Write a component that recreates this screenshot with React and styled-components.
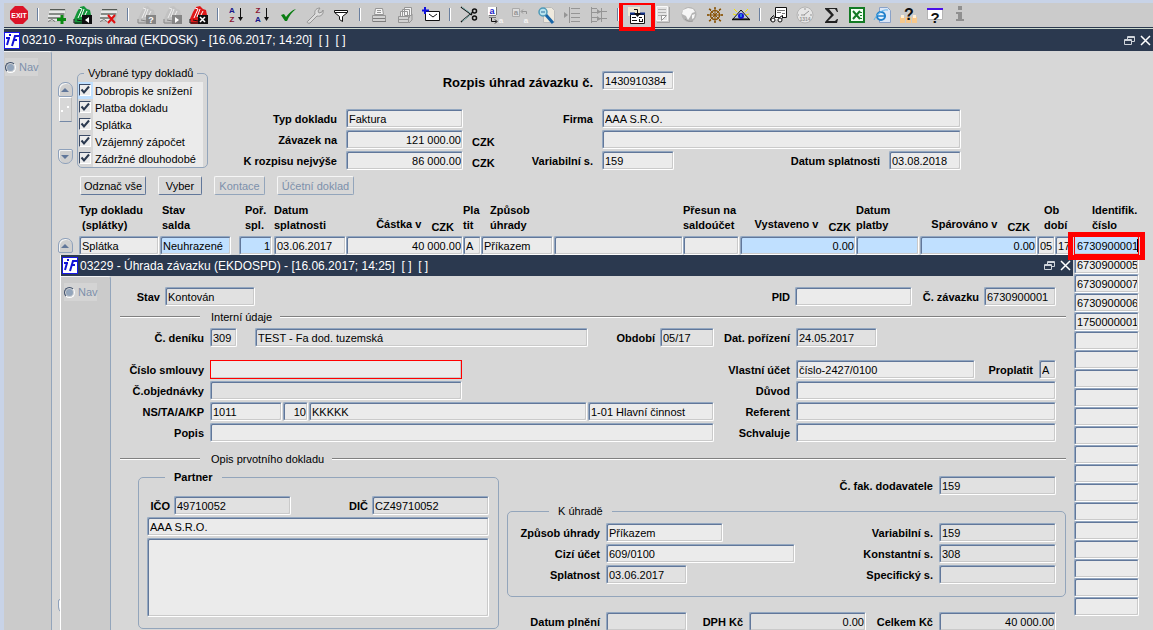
import React from 'react'
import styled, { createGlobalStyle, css } from 'styled-components'

const GlobalStyle = createGlobalStyle`
* { box-sizing: border-box; }
html, body { margin: 0; height: 100%; overflow: hidden; }
body, input, button, textarea {
  font-family: "Liberation Sans", Arial, sans-serif;
  font-size: 11px;
  color: #000;
}
`

const Desktop = styled.div`
height: 100vh;
display: flex;
flex-direction: column;
overflow: hidden;
background-color: #d7d7d7;
border-left: 4px solid #c8d3e7;
border-top: 3px solid #c8d3e7;
`
const Toolbar = styled.div`
height: 26px;
flex: none;
display: flex;
align-items: flex-start;
padding-left: 2px;
background-color: #cbcbcb;
border-bottom: 1px solid #ccd8cc;
box-shadow: inset 0 -1px #2b394f;
`
const ToolButton = styled.button`
position: relative;
flex: none;
width: 26px;
height: 24px;
padding: 0;
border: 0;
background: none;
display: flex;
align-items: center;
justify-content: center;
`
const Separator = styled.span`
flex: none;
width: 2px;
height: 13px;
margin: 5px;
background-color: #fff;
border-left: 1px solid #6a7f9f;
`
const Marker = styled.span`
position: absolute;
pointer-events: none;
z-index: 3;
border: 5px solid #ff0000;
${(props) => props.$tool
  ? css`left: -5px; top: -2px; width: 36px; height: 30px; border-width: 4px;`
  : css`left: -6px; top: -4px; right: -5px; bottom: -5px;`}
`
const TitleBar = styled.div`
height: ${(props) => (props.$child ? 21 : 22)}px;
flex: none;
display: flex;
align-items: center;
gap: 2px;
padding: 0 1px 0 ${(props) => (props.$child ? 1 : 0)}px;
background-color: #2b394f;
color: #fff;
font-size: 12px;
white-space: pre;
`
const WindowTitle = styled.span`
flex: 1;
`
const WindowButton = styled.button`
width: 14px;
height: 14px;
padding: 0;
border: 0;
background: none;
display: flex;
align-items: center;
justify-content: center;
`
const WindowBody = styled.div`
position: relative;
flex: 1;
min-height: 0;
display: flex;
`
const Sidebar = styled.div`
flex: none;
width: ${(props) => (props.$child ? 50 : 48)}px;
padding: 6px 0 0 ${(props) => (props.$child ? 3 : 1)}px;
background-color: #cbcbcb;
border-right: 1px solid #93a5bb;
border-top: 1px solid #f2f2f2;
border-top-right-radius: 3px;
`
const NavLabel = styled.label`
width: 33px;
height: 18px;
display: flex;
align-items: center;
gap: 3px;
color: #7d90ab;
background-color: #d4d4d4;
`
const NavRadio = styled.input`
appearance: none;
flex: none;
width: 11px;
height: 11px;
margin: 0;
border: 1px solid #41516b;
border-right-color: #fff;
border-bottom-color: #fff;
border-radius: 50%;
background-color: #93a5bb;
box-shadow: inset 0 0 0 1px #d4d4d4;
`
const Main = styled.div`
flex: 1;
min-width: 0;
padding: 0 13px 0 6px;
`
const Top = styled.div`
display: flex;
height: 121px;
`
const ScrollBar = styled.div`
flex: none;
width: 15px;
height: 82px;
margin: 31px 4px 0 0;
display: flex;
flex-direction: column;
`
const ScrollButton = styled.button`
width: 15px;
height: 15px;
flex: none;
padding: 0;
display: flex;
align-items: center;
justify-content: center;
background-color: #cfcfcf;
border: 1px solid #8ea1bb;
border-radius: ${(props) => (props.$down ? '2px 2px 7px 7px' : '7px 7px 2px 2px')};
box-shadow: inset 1px 1px #f4f4f4;
`
const ScrollThumb = styled.div`
height: 25px;
margin: 0 1px auto;
display: flex;
align-items: center;
justify-content: center;
border: 1px solid #fff;
border-bottom-color: #7488a6;
border-right-color: #bbb;
`
const Group = styled.fieldset`
min-width: 0;
margin: 0;
padding: 0;
border: 1px solid #93a5bb;
border-radius: 5px;
`
const Legend = styled.legend`
height: 14px;
line-height: 14px;
padding: 0 ${(props) => props.$pad || 4}px;
margin-left: ${(props) => props.$left}px;
font-weight: ${(props) => (props.$bold ? 'bold' : 'normal')};
`
const TypesGroup = styled(Group)`
flex: none;
width: 131px;
height: 102px;
margin-top: 15px;
padding-top: 2px;
`
const TypeRow = styled.label`
height: 17px;
margin-right: 4px;
display: flex;
align-items: center;
white-space: nowrap;
`
const TypeText = styled.span`
flex: 1;
height: 17px;
line-height: 18px;
padding-left: 2px;
background-color: #ebebeb;
`
const TickSlot = styled.span`
width: 15px;
height: 17px;
padding: 2px 0 0 1px;
background-color: ${(props) => (props.$active ? '#c0e0ff' : 'transparent')};
`
const Tick = styled.input`
appearance: none;
display: block;
width: 12px;
height: 12px;
margin: 0;
border: 1px solid #3c4b66;
border-right-color: #fff;
border-bottom-color: #fff;
background: #ececec url("data:image/svg+xml,%3Csvg xmlns='http://www.w3.org/2000/svg' viewBox='0 0 10 10'%3E%3Cpath d='M1.5 4.5l2.5 3 5-6' fill='none' stroke='%232b394f' stroke-width='2'/%3E%3C/svg%3E");
`
const HeadForm = styled.div`
flex: 1;
min-width: 0;
margin-top: 20px;
padding-right: 179px;
display: grid;
grid-template-columns: 129px 117px 121px minmax(0, 1fr);
grid-template-rows: 38px 21px 21px 21px;
column-gap: 9px;
`
const Caption = styled.label`
flex: none;
width: ${(props) => (props.$w ? `${props.$w}px` : 'auto')};
line-height: 20px;
height: 19px;
text-align: right;
font-weight: bold;
font-size: ${(props) => (props.$big ? 13 : 11)}px;
white-space: nowrap;
`
const HeadTitle = styled(Caption)`
grid-column: 1 / 4;
line-height: 24px;
`
const SplitCell = styled.div`
display: flex;
justify-content: space-between;
`
const Currency = styled.span`
font-weight: bold;
line-height: 24px;
height: 19px;
`
const fieldLook = css`
display: block;
min-width: 0;
padding: 1px 1px 0 2px;
border: 1px solid #93a7c0;
border-right-color: #fff;
border-bottom-color: #fff;
border-radius: 2px;
box-shadow: inset 1px 1px #61779a, inset -1px -1px #cacaca;
background-color: ${(props) => (props.$active ? '#c0e0ff' : props.$locked ? '#e1e1e1' : '#ebebeb')};
outline: 0;
`
const Field = styled.input`
${fieldLook}
height: 19px;
width: ${(props) => (props.$w ? `${props.$w}px` : '100%')};
flex: ${(props) => (props.$w ? 'none' : '1 1 0')};
text-align: ${(props) => (props.$num ? 'right' : 'left')};
${(props) => props.$alert && css`
border: 1px solid #ff0000;
border-radius: 0;
box-shadow: inset -1px -1px #cacaca;
`}
`
const NoteArea = styled.textarea`
${fieldLook}
width: 100%;
height: 79px;
resize: none;
`
const ButtonRow = styled.div`
display: flex;
gap: 12px;
margin-top: 4px;
padding-left: 22px;
`
const PushButton = styled.button`
width: ${(props) => props.$w}px;
height: 19px;
padding: 0;
white-space: nowrap;
border: 1px solid #f6f6f6;
border-right-color: #61779a;
border-bottom-color: #61779a;
border-radius: 2px;
background-color: #d7d7d7;
&:disabled {
  color: #7d90ab;
  border-right-color: #93a5bb;
  border-bottom-color: #93a5bb;
}
`
const Table = styled.table`
width: 100%;
margin-top: 8px;
table-layout: fixed;
border-collapse: collapse;
`
const Th = styled.th`
height: 33px;
padding: 0 0 0 ${(props) => props.$left || 0}px;
vertical-align: top;
text-align: left;
line-height: 15px;
font-size: 11px;
white-space: pre;
`
const MoneyHead = styled.div`
display: flex;
justify-content: flex-end;
gap: 10px;
padding: 14px ${(props) => props.$right}px 0 0;
`
const Unit = styled.span`
padding-top: 3px;
`
const Td = styled.td`
position: relative;
height: 19px;
padding: 0 ${(props) => props.$gap || 0}px 0 0;
`
const Caret = styled.span`
position: absolute;
right: 2px;
top: 3px;
width: 1px;
height: 13px;
background-color: #000;
`
const ChildWindow = styled.section`
position: absolute;
left: 56px;
right: 80px;
top: 204px;
bottom: 0;
z-index: 2;
display: flex;
flex-direction: column;
overflow: hidden;
background-color: #d7d7d7;
border-left: 1px solid #fff;
`
const ChildMain = styled.div`
flex: 1;
min-width: 0;
padding: 11px 7px 0 9px;
`
const Line = styled.div`
display: flex;
gap: ${(props) => (props.$gap === undefined ? 6 : props.$gap)}px;
margin: ${(props) => props.$top || 0}px 0 ${(props) => props.$bottom || 0}px;
padding-right: ${(props) => props.$right || 0}px;
`
const Push = styled.span`
flex: 1;
`
const Divider = styled.div`
display: flex;
align-items: center;
gap: 8px;
height: 14px;
margin-top: ${(props) => props.$top}px;
&::before, &::after {
  content: "";
  height: 1px;
  background-color: #808080;
  border-bottom: 1px solid #fff;
}
&::before { width: 80px; margin-right: 3px; }
&::after { flex: 1; }
`
const FormGrid = styled.div`
display: grid;
grid-template-columns: 84px minmax(0, 1fr) 70px 260px;
column-gap: 6px;
row-gap: 2px;
margin-top: ${(props) => props.$top}px;
padding-right: 10px;
`
const Columns = styled.div`
display: flex;
gap: 8px;
margin-top: 4px;
`
const PartnerGroup = styled(Group)`
flex: none;
width: 361px;
height: 159px;
margin-left: 18px;
padding: 12px 9px 0 8px;
`
const PayColumn = styled.div`
flex: 1;
min-width: 0;
padding-top: 6px;
`
const PayGroup = styled(Group)`
height: 93px;
padding: 5px 9px 0 0;
margin-top: 9px;
`

const ink = '#101010'
const grey = '#959595'

// a sheet of slanted lines, shared by the two record icons
const Sheet = () => (
  <>
    <path d="M3 4h16l-1 6-2 7H1l1-7z" fill="#b9bdb9" />
    <path d="M2 7h16M1 11h14M1 15h12" stroke="#f6f6f6" strokeWidth="1.500" />
    <path d="M3 4.500h15M2 9h15M1 13h13" stroke="#555a55" />
    <path d="M1 16.500l4-2 3 2" stroke="#777" fill="none" />
  </>
)

const Binder = ({ color, dark, shine = '#fff', sign }) => (
  <>
    <path d="M1 14L4 7l3-5 4-1 3 3 3 1 1 5-4 9H2z" fill={color} />
    <path d="M6 3l3 1-4 9M11 4L8 12M14 6l-3 6" stroke={shine} fill="none" />
    <path d="M1 14v4h8M4 15l5 1" stroke={dark} fill="none" />
    <path d="M9 10h10v9H9z" fill={dark} />
    {sign}
  </>
)

const Letter = ({ x, y, size, fill, children }) => (
  <text x={x} y={y} fontSize={size} fontWeight="bold" fill={fill} textAnchor="middle">{children}</text>
)

const icons = {
  Exit: (
    <>
      <path d="M6 1h8l5 5v8l-5 5H6l-5-5V6z" fill="#dc1428" />
      <Letter x={10} y={13} size={7} fill="#fff">EXIT</Letter>
    </>
  ),
  'Nový záznam': <><Sheet /><path d="M15 10v9M10 14.500h9" stroke="#0b8a12" strokeWidth="3" /></>,
  'Předchozí': <Binder color="#15963a" dark={ink} sign={<path d="M16 12v6l-4-3z" fill="#fff" />} />,
  'Smazat záznam': <><Sheet /><path d="M9 10l7 8M16 10l-7 8" stroke="#e01010" strokeWidth="2" /></>,
  Dotaz: <Binder color="#c2c2c2" dark="#858585" shine="#eee" sign={<Letter x={14} y={18} size={9} fill="#fff">?</Letter>} />,
  'Proveď dotaz': <Binder color="#c2c2c2" dark="#858585" shine="#eee" sign={<path d="M12 12v6l4-3z" fill="#fff" />} />,
  'Zruš dotaz': <Binder color="#e01818" dark={ink} sign={<path d="M11 12l5 5M16 12l-5 5" stroke="#fff" strokeWidth="1.500" />} />,
  'Třídit vzestupně': (
    <>
      <Letter x={5} y={8} size={8} fill="#16168a">A</Letter>
      <Letter x={5} y={17} size={8} fill="#8a1632">Z</Letter>
      <path d="M13.500 3v12" stroke={ink} />
      <path d="M11 12h5l-2.500 4z" fill={ink} />
    </>
  ),
  'Třídit sestupně': (
    <>
      <Letter x={5} y={8} size={8} fill="#8a1632">Z</Letter>
      <Letter x={5} y={17} size={8} fill="#16168a">A</Letter>
      <path d="M13.500 3v12" stroke={ink} />
      <path d="M11 12h5l-2.500 4z" fill={ink} />
    </>
  ),
  Potvrdit: <path d="M2 10l3-1 2 3c3-4 6-7 10-8-4 3-7 7-9 12H6z" fill="#0a7d12" />,
  Nastavení: (
    <path d="M3 16l7-7c-1-4 2-6 5-6l-2 3 1 2 3-1 1-2c1 4-2 7-6 6l-7 7c-2 1-4-1-2-2z" stroke={grey} fill="#ddd" />
  ),
  Filtr: <path d="M3.500 5.500h13v2l-5 4v5l-3-2v-3l-5-4zM4 7.500h12" stroke={ink} fill="#fff" />,
  Tisk: (
    <>
      <path d="M6.500 3.500h7l1 6h-9z" fill="#f5f5f5" stroke={grey} />
      <path d="M8 5.500h4M8 7.500h4" stroke={grey} />
      <path d="M3.500 10.500h13v6h-13z" fill="#d2d2d2" stroke={grey} />
      <path d="M4 13.500h12M4 16.500h13" stroke="#7c7c7c" />
    </>
  ),
  'Tisk sestav': (
    <>
      <path d="M9.500 2.500h7v8h-7zM7.500 4.500h7v8h-7zM5.500 6.500h7v6h-7z" fill="#f5f5f5" stroke={grey} />
      <path d="M3.500 11.500h10v6h-10z" fill="#d2d2d2" stroke={grey} />
      <path d="M14 12l3-3v6l-3 3M4 14.500h9" stroke={grey} fill="none" />
    </>
  ),
  Pošta: (
    <>
      <path d="M4.500 6.500h14v9h-14z" fill="#fff" stroke={ink} />
      <path d="M8 9l4 3 4-3" stroke={ink} fill="none" />
      <path d="M4 2v7M1 5.500h7" stroke="#1010e0" strokeWidth="2" />
    </>
  ),
  Vyjmout: (
    <>
      <path d="M2 2l11 8M2 17L14 7" stroke={ink} strokeWidth="1.500" />
      <path d="M3 2l9 6.500M3 16.500l8-6.500" stroke="#8fc0c0" />
      <circle cx="15.500" cy="6" r="2" fill="none" stroke={ink} strokeWidth="1.500" />
      <circle cx="15.500" cy="13" r="2" fill="none" stroke={ink} strokeWidth="1.500" />
    </>
  ),
  Kopírovat: (
    <>
      <path d="M3 2h8v8H3z" fill="#fff" />
      <path d="M4 10.500h7M4 12.500h7M11.500 2v8" stroke="#777" />
      <Letter x={7} y={9} size={9} fill="#2020c8">a</Letter>
      <path d="M6.500 13v3.500h5M10 14.500l2 2-2 2" stroke={ink} fill="none" />
      <Letter x={16} y={18} size={8} fill="#f4f4f4">a</Letter>
    </>
  ),
  Vložit: (
    <>
      <path d="M1.500 3.500h7v8h-7z" fill="#ddd" stroke="#aaa" />
      <Letter x={5} y={10} size={8} fill={grey}>a</Letter>
      <path d="M15.500 9V6.500h-5M12 4.500l-2 2 2 2" stroke={grey} fill="none" />
      <Letter x={15} y={18} size={8} fill="#f4f4f4">a</Letter>
    </>
  ),
  Lupa: (
    <>
      <path d="M6.500 2.500h8l3 3v12h-11z" fill="#eee9dd" stroke="#bbb" />
      <circle cx="6" cy="7" r="4" fill="#b8e2ee" stroke="#4f9ab8" strokeWidth="1.500" />
      <path d="M4 7h4" stroke="#2b70a0" />
      <path d="M9 10l7 8" stroke="#1764a8" strokeWidth="3" />
    </>
  ),
  'Seznam vpravo': (
    <>
      <path d="M6.500 2v16M8 3.500h9M8 8.500h9M8 12.500h9M8 16.500h9" stroke={grey} />
      <path d="M1 7l4 3-4 3z" fill={grey} />
    </>
  ),
  'Seznam vlevo': (
    <>
      <path d="M2.500 2v16M3 3.500h5M3 7.500h5M3 12.500h5M3 16.500h5M12.500 3v14M10 6.500h8M10 13.500h8" stroke={grey} />
      <path d="M8 4l4 3-4 2zM8 11l4 3-4 2z" fill={grey} />
    </>
  ),
  Detail: (
    <>
      <path d="M1 2h12v9H1z" fill="#f1ead2" />
      <path d="M3.500 9.500h14v9h-14z" fill="#fff" stroke={ink} />
      <path d="M3 8.500h5M13 8.500h5" stroke="#10308a" strokeWidth="2" />
      <path d="M5 12.500h4M5 15.500h5M12 12.500h3M12.500 14v3M12 16.500h3M15.500 14v3" stroke={ink} />
      <path d="M7 4.500h3.500V10" stroke={ink} fill="none" />
      <path d="M7 8h7l-3.500 4z" fill={ink} />
    </>
  ),
  Poznámka: (
    <>
      <path d="M3.500 1.500h11v14h-11z" fill="#e4e4e4" stroke="#f8f8f8" />
      <path d="M16.500 2v15.500H4" stroke="#a5a5a5" fill="none" />
      <path d="M5 4.500h8M5 7.500h8M5 10.500h4" stroke="#b0b0b0" />
      <path d="M8.500 15.500v-5h5z" fill="#fff" stroke={grey} />
    </>
  ),
  Svět: (
    <>
      <circle cx="10" cy="9.500" r="7.500" fill="#b4b4b4" />
      <path d="M4 5l5-2 5 1 2 3-3 1-2 4-2 3-2-4-4-2zM13 10l3-1-1 4-2 1z" fill="#f6f6f6" />
      <path d="M6 14c2 2 5 3 8 2" stroke="#999" fill="none" />
    </>
  ),
  Kormidlo: (
    <>
      <circle cx="10" cy="10" r="4.500" fill="none" stroke="#8a5508" strokeWidth="1.500" />
      <circle cx="10" cy="10" r="1.500" fill="#8a5508" />
      <path d="M10 3v14M2 10h16M5 5l10 10M15 5L5 15" stroke="#8a5508" />
      <path d="M9 3h2M9 17h2M3 9v2M17 9v2M4 4l2 1M16 4l-2 1M4 16l2-1M16 16l-2-1" stroke="#8a5508" strokeWidth="1.500" />
    </>
  ),
  Oko: (
    <>
      <path d="M3 4l3 3M17 4l-3 3M2 9l3 1M18 9l-3 1" stroke="#f2e400" />
      <path d="M10 5l8 9H2z" fill="#b9c8dc" stroke={ink} />
      <circle cx="10" cy="11" r="3" fill="#1212d8" />
      <path d="M10 9v3" stroke="#2fe0e0" />
      <path d="M1 14.500h18" stroke={ink} strokeWidth="1.500" />
    </>
  ),
  Vozík: (
    <>
      <path d="M6.500 2.500h11v10h-11z" fill="#fff" stroke={ink} />
      <path d="M8 5.500h8M8 7.500h4M13 8.500h3" stroke="#777" />
      <path d="M1.500 15.500v-2l3-3 1 2h5l3-2v3" fill="#fff" stroke={ink} />
      <circle cx="4" cy="15" r="2" fill="#fff" stroke={ink} />
      <circle cx="11" cy="15" r="2" fill="#fff" stroke={ink} />
    </>
  ),
  Hodiny: (
    <>
      <circle cx="10" cy="10" r="8" fill="#e6e6e6" stroke="#b4b4b4" />
      <path d="M9 10l5-4M10 10H6M10 3v2M3 10h1M15 10h2" stroke={grey} />
      <Letter x={10} y={16} size={5} fill={grey}>1314</Letter>
    </>
  ),
  Součet: <path d="M17 7l-1-4H4v1l6 6-6 7v1h12l1-4h-1l-2 2H7l6-6-5-6h6l2 3z" fill="#222" />,
  Excel: (
    <>
      <path d="M3 3h14v14H3z" fill="#f4fff4" stroke="#137a24" strokeWidth="2" />
      <path d="M6 6l7 8M13 6l-7 8" stroke="#137a24" strokeWidth="2" />
      <path d="M13 7.500h2M13 10.500h2M13 13.500h2" stroke="#137a24" />
    </>
  ),
  Prohlížeč: (
    <>
      <path d="M6.500 2.500h8l3 3v12h-11z" fill="#dbe6f6" stroke="#8aa2c8" />
      <circle cx="8" cy="11" r="4" fill="#e8f4ff" stroke="#2080cc" strokeWidth="2" />
      <path d="M4 11h9" stroke="#2080cc" strokeWidth="1.500" />
      <path d="M1 15c3-6 8-11 14-10" stroke="#5fb4ea" fill="none" />
    </>
  ),
  Poradce: (
    <>
      <path d="M1 12h5v6H1zM7 12h5v6H7zM13 12h5v6h-5z" fill="#f7c98c" />
      <path d="M2 10h3v3H2zM14 10h3v3h-3z" fill="#fff1d8" />
      <Letter x={10} y={15} size={16} fill={ink}>?</Letter>
    </>
  ),
  Nápověda: (
    <>
      <path d="M2.500 3.500h15v11h-15z" fill="#fff" stroke="#b5b5b5" />
      <path d="M2 4h16" stroke="#4a10e8" strokeWidth="2" />
      <Letter x={10} y={18} size={15} fill={ink}>?</Letter>
    </>
  ),
  Informace: (
    <path d="M7 1h4v4H7zM5 7h6v7h2v2H5v-2h2V9H5z" fill="#909090" />
  ),
}

const tools = [
  'Exit', '|', 'Nový záznam', 'Předchozí', 'Smazat záznam', '|', 'Dotaz', 'Proveď dotaz', 'Zruš dotaz', '|',
  'Třídit vzestupně', 'Třídit sestupně', 'Potvrdit', 'Nastavení', 'Filtr', '|', 'Tisk', 'Tisk sestav', 'Pošta', '|',
  'Vyjmout', 'Kopírovat', 'Vložit', 'Lupa', 'Seznam vpravo', 'Seznam vlevo', '|',
  'Detail', 'Poznámka', 'Svět', 'Kormidlo', 'Oko', '|',
  'Vozík', 'Hodiny', 'Součet', 'Excel', 'Prohlížeč', 'Poradce', 'Nápověda', 'Informace',
]

const documentTypes = ['Dobropis ke snížení', 'Platba dokladu', 'Splátka', 'Vzájemný zápočet', 'Zádržné dlouhodobé']

const columns = [
  { width: 21, title: '' },
  { width: 81, title: 'Typ dokladu\n (splátky)', value: 'Splátka', gap: 1 },
  { width: 79, title: 'Stav\nsalda', left: 2, value: 'Neuhrazené', active: true, gap: 8 },
  { width: 35, title: 'Poř.\nspl.', left: 6, value: '1', num: true, active: true, gap: 2 },
  { width: 72, title: 'Datum\nsplatnosti', value: '03.06.2017' },
  { width: 117, title: 'Částka v', unit: 'CZK', right: 9, value: '40 000.00', num: true },
  { width: 18, title: 'Pla\ntit', value: 'A' },
  { width: 73, title: 'Způsob\núhrady', left: 9, value: 'Příkazem', gap: 1 },
  { title: '', value: '', name: 'Poznámka ke splátce' },
  { width: 57, title: 'Přesun na\nsaldoúčet', value: '', gap: 1 },
  { width: 116, title: 'Vystaveno v', unit: 'CZK', right: 5, value: '0.00', num: true, active: true },
  { width: 64, title: 'Datum\nplatby', value: '', active: true, gap: 1 },
  { width: 117, title: 'Spárováno v', unit: 'CZK', right: 7, value: '0.00', num: true, active: true },
  { width: 18, title: 'Ob\ndobí', left: 7, value: '05' },
  { width: 19, title: '', value: '17', name: 'Rok', gap: 1 },
  { width: 66, title: 'Identifik.\nčíslo', left: 18 },
]

const identNumbers = ['6730900001', '6730900005', '6730900007', '6730900006', '1750000001']
const rows = Array.from({ length: 20 }, (_, i) => identNumbers[i] || '')

const Arrow = ({ down }) => (
  <svg width="9" height="6" viewBox="0 0 9 6">
    <path d={down ? 'M0 1h8L4 5z' : 'M0 5h8L4 1z'} fill="#61779a" />
  </svg>
)

const Logo = () => (
  <svg width="16" height="17" viewBox="0 0 16 17" aria-label="iF">
    <path d="M0 0h16v17H0z" fill="#fff" stroke="#1717e8" strokeWidth="2" />
    <path d="M5 6L3 13M2 6h4M6 2v2M8 14l3-10h4M9 8h4" stroke="#1010d8" strokeWidth="2" fill="none" />
  </svg>
)

const Window = ({ title, child, children }) => (
  <>
    <TitleBar $child={child}>
      <Logo />
      <WindowTitle>{title}</WindowTitle>
      <WindowButton aria-label="Obnovit">
        <svg width="11" height="11" viewBox="0 0 11 11">
          <path d="M3.500 4V1.500h7v5H8M.5 4.500h7v5h-7zM4 2.500h6M1 5.500h6" stroke="#cfd4da" fill="none" />
        </svg>
      </WindowButton>
      <WindowButton aria-label="Zavřít">
        <svg width="11" height="11" viewBox="0 0 11 11">
          <path d="M1 1l9 9M10 1l-9 9" stroke="#fff" strokeWidth="1.500" />
        </svg>
      </WindowButton>
    </TitleBar>
    <WindowBody>
      <Sidebar $child={child}>
        <NavLabel><NavRadio type="radio" disabled />Nav</NavLabel>
      </Sidebar>
      {children}
    </WindowBody>
  </>
)

// label and its text box side by side
const Pair = ({ id, label, w, ...field }) => (
  <>
    <Caption htmlFor={id} $w={w}>{label}</Caption>
    <Field id={id} readOnly {...field} />
  </>
)

const HeadCell = ({ col }) => (
  <Th $left={col.left}>
    {col.unit
      ? <MoneyHead $right={col.right}>{col.title}<Unit>{col.unit}</Unit></MoneyHead>
      : col.title}
  </Th>
)

const PaymentTable = () => (
  <Table>
    <colgroup>
      {columns.map((col, i) => <col key={i} width={col.width} />)}
    </colgroup>
    <thead>
      <tr>{columns.map((col, i) => <HeadCell key={i} col={col} />)}</tr>
    </thead>
    <tbody>
      {rows.map((ident, i) => (
        <tr key={i}>
          <Td>
            {i === 0 && <ScrollButton aria-label="Nahoru"><Arrow /></ScrollButton>}
            {i === 19 && <ScrollButton $down aria-label="Dolů"><Arrow down /></ScrollButton>}
          </Td>
          {i === 0 ? columns.slice(1, -1).map((col, n) => (
            <Td key={n} $gap={col.gap}>
              <Field readOnly aria-label={col.name || col.title} defaultValue={col.value} $num={col.num} $active={col.active} />
            </Td>
          )) : <Td colSpan={14} />}
          <Td $gap={1}>
            <Field aria-label="Identifik. číslo" defaultValue={ident} $active={i === 0} $alert={i === 0} />
            {i === 0 && <><Caret /><Marker /></>}
          </Td>
        </tr>
      ))}
    </tbody>
  </Table>
)

const PaymentDetail = () => (
  <ChildMain>
    <Line $right={10} $gap={5}>
      <Pair id="stav" label="Stav" w={40} $w={90} $locked defaultValue="Kontován" />
      <Push />
      <Pair id="pid" label="PID" $w={117} defaultValue="" />
      <Pair id="zavazek" label="Č. závazku" w={62} $w={72} $locked defaultValue="6730900001" />
    </Line>
    <Divider $top={4}>Interní údaje</Divider>
    <FormGrid $top={4}>
      <Caption htmlFor="denik">Č. deníku</Caption>
      <Line $gap={18}>
        <Field id="denik" readOnly $w={27} $locked defaultValue="309" />
        <Field aria-label="Název deníku" readOnly $locked defaultValue="TEST - Fa dod. tuzemská" />
        <Line $gap={5}>
          <Pair id="obdobi" label="Období" w={49} $w={54} $locked defaultValue="05/17" />
        </Line>
      </Line>
      <Pair id="porizeni" label="Dat. pořízení" $w={81} $locked defaultValue="24.05.2017" />
    </FormGrid>
    <FormGrid $top={13}>
      <Caption htmlFor="smlouva">Číslo smlouvy</Caption>
      <Field id="smlouva" $w={252} $alert defaultValue="" />
      <Caption htmlFor="ucet">Vlastní účet</Caption>
      <Line>
        <Field id="ucet" $w={179} defaultValue="číslo-2427/0100" />
        <Push />
        <Pair id="proplatit" label="Proplatit" $w={17} $locked defaultValue="A" />
      </Line>
      <Pair id="objednavka" label="Č.objednávky" $w={252} $locked defaultValue="" />
      <Pair id="duvod" label="Důvod" defaultValue="" />
      <Caption htmlFor="ns">NS/TA/A/KP</Caption>
      <Line $gap={1}>
        <Field id="ns" $w={72} defaultValue="1011" />
        <Field aria-label="TA" $w={25} $num defaultValue="10" />
        <Field aria-label="A" defaultValue="KKKKK" />
        <Field aria-label="KP" $w={126} defaultValue="1-01 Hlavní činnost" />
      </Line>
      <Pair id="referent" label="Referent" defaultValue="" />
      <Pair id="popis" label="Popis" defaultValue="" />
      <Pair id="schvaluje" label="Schvaluje" defaultValue="" />
    </FormGrid>
    <Divider $top={10}>Opis prvotního dokladu</Divider>
    <Columns>
      <PartnerGroup>
        <Legend $left={18} $pad={9} $bold>Partner</Legend>
        <Line $gap={4} $bottom={2}>
          <Pair id="ico" label="IČO" w={23} $w={117} $locked defaultValue="49710052" />
          <Push />
          <Pair id="dic" label="DIČ" $w={117} $locked defaultValue="CZ49710052" />
        </Line>
        <Line $bottom={2}><Field aria-label="Název partnera" readOnly defaultValue="AAA S.R.O." /></Line>
        <NoteArea aria-label="Adresa partnera" readOnly />
      </PartnerGroup>
      <PayColumn>
        <Line $right={10}>
          <Push />
          <Pair id="faktura" label="Č. fak. dodavatele" $w={117} $locked defaultValue="159" />
        </Line>
        <PayGroup>
          <Legend $left={41} $pad={9}>K úhradě</Legend>
          <Line $bottom={2}>
            <Pair id="zpusob" label="Způsob úhrady" w={92} $w={117} defaultValue="Příkazem" />
            <Push />
            <Pair id="vs" label="Variabilní s." $w={117} $locked defaultValue="159" />
          </Line>
          <Line $bottom={2}>
            <Pair id="cizi" label="Cizí účet" w={92} $w={189} defaultValue="609/0100" />
            <Push />
            <Pair id="ks" label="Konstantní s." $w={117} $locked defaultValue="308" />
          </Line>
          <Line>
            <Pair id="splatnost" label="Splatnost" w={92} $w={81} $locked defaultValue="03.06.2017" />
            <Push />
            <Pair id="ss" label="Specifický s." $w={117} $locked defaultValue="" />
          </Line>
        </PayGroup>
        <Line $top={15} $right={10}>
          <Pair id="plneni" label="Datum plnění" w={93} $w={81} $locked defaultValue="" />
          <Push />
          <Pair id="dph" label="DPH Kč" $w={117} $num $locked defaultValue="0.00" />
          <Pair id="celkem" label="Celkem Kč" w={61} $w={117} $num $locked defaultValue="40 000.00" />
        </Line>
      </PayColumn>
    </Columns>
  </ChildMain>
)

const App = () => {
  return (
    <Desktop>
      <GlobalStyle />
      <Toolbar>
        {tools.map((name, i) => name === '|' ? <Separator key={i} /> : (
          <ToolButton key={i} aria-label={name}>
            <svg width="20" height="20" viewBox="0 0 20 20">{icons[name]}</svg>
            {name === 'Detail' && <Marker $tool />}
          </ToolButton>
        ))}
      </Toolbar>
      <Window title={'03210 - Rozpis úhrad (EKDOSK) - [16.06.2017; 14:20]  [ ]  [ ]'}>
        <Main>
          <Top>
            <ScrollBar>
              <ScrollButton aria-label="Nahoru"><Arrow /></ScrollButton>
              <ScrollThumb>
                <svg width="9" height="7" viewBox="0 0 9 7"><path d="M0 4h2v2H0zM6 0h2v2H6z" fill="#fff" /></svg>
              </ScrollThumb>
              <ScrollButton $down aria-label="Dolů"><Arrow down /></ScrollButton>
            </ScrollBar>
            <TypesGroup>
              <Legend $left={6}>Vybrané typy dokladů</Legend>
              {documentTypes.map((name, i) => (
                <TypeRow key={name}>
                  <TickSlot $active={i === 0}><Tick type="checkbox" defaultChecked /></TickSlot>
                  <TypeText>{name}</TypeText>
                </TypeRow>
              ))}
            </TypesGroup>
            <HeadForm>
              <HeadTitle htmlFor="cislo" $big>Rozpis úhrad závazku č.</HeadTitle>
              <Field id="cislo" readOnly $w={72} defaultValue="1430910384" />
              <Pair id="typ" label="Typ dokladu" defaultValue="Faktura" />
              <Caption htmlFor="firma">Firma</Caption>
              <Field id="firma" readOnly defaultValue="AAA S.R.O." />
              <Pair id="castka" label="Závazek na" $num defaultValue="121 000.00" />
              <SplitCell><Currency>CZK</Currency></SplitCell>
              <Field aria-label="Firma 2" readOnly defaultValue="" />
              <Pair id="rozpis" label="K rozpisu nejvýše" $num defaultValue="86 000.00" />
              <SplitCell>
                <Currency>CZK</Currency>
                <Caption htmlFor="varsym">Variabilní s.</Caption>
              </SplitCell>
              <Line $gap={9}>
                <Field id="varsym" readOnly $w={72} defaultValue="159" />
                <Push />
                <Pair id="datspl" label="Datum splatnosti" $w={72} defaultValue="03.08.2018" />
              </Line>
            </HeadForm>
          </Top>
          <ButtonRow>
            <PushButton $w={66}>Odznač vše</PushButton>
            <PushButton $w={44}>Vyber</PushButton>
            <PushButton $w={51} disabled>Kontace</PushButton>
            <PushButton $w={77} disabled>Účetní doklad</PushButton>
          </ButtonRow>
          <PaymentTable />
        </Main>
        <ChildWindow>
          <Window child title={'03229 - Úhrada závazku (EKDOSPD) - [16.06.2017; 14:25]  [ ]  [ ]'}>
            <PaymentDetail />
          </Window>
        </ChildWindow>
      </Window>
    </Desktop>
  )
}

export default App
